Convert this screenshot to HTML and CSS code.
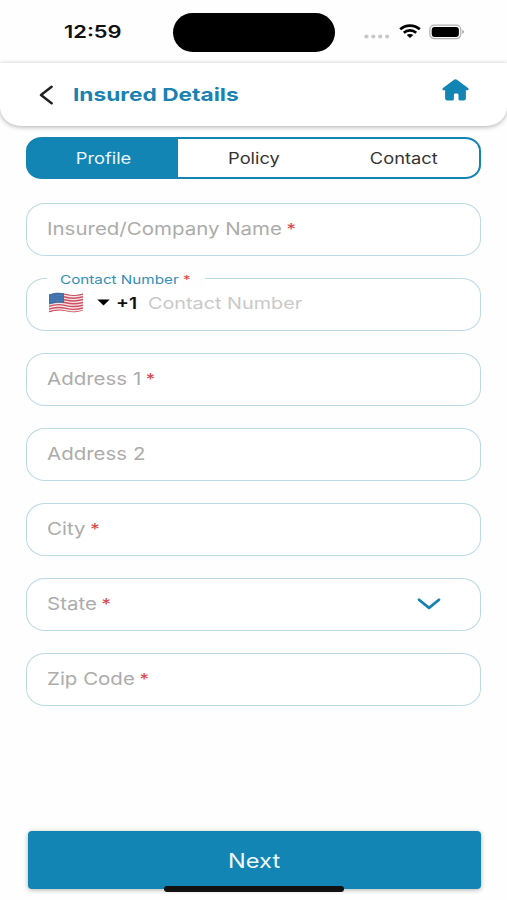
FILE: index.html
```html
<!DOCTYPE html>
<html lang="en">
<head>
<meta charset="utf-8">
<title>Insured Details</title>
<link rel="stylesheet" href="styles.css">
</head>
<body>
<div class="status">
  <div class="time"><span class="wide">12:59</span></div>
  <div class="island"></div>
  <div class="indicators">
    <svg class="dots" width="26" height="5" viewBox="0 0 26 5" fill="#c8c8c8"><circle cx="2.400" cy="2.500" r="2.100"/><circle cx="9.300" cy="2.500" r="2.100"/><circle cx="16.200" cy="2.500" r="2.100"/><circle cx="23.100" cy="2.500" r="2.100"/></svg>
    <svg class="wifi" width="22" height="14" viewBox="0 0 22 14" fill="none" stroke="#000" stroke-width="2.700"><path d="M1.200 5.200C6.800.3 15.200.3 20.800 5.200"/><path d="M4.800 8.700c3.500-3 8.900-3 12.400 0"/><path d="M11 14 7.700 11.100c1.800-1.600 4.800-1.600 6.600 0z" fill="#000" stroke="none"/></svg>
    <svg class="battery" width="36" height="16" viewBox="0 0 36 16"><rect x=".8" y="1.200" width="31" height="13.400" rx="4.600" ry="4" fill="#fff" stroke="#b0b0b0" stroke-width="1.200"/><rect x="2.700" y="2.900" width="27.200" height="10" rx="3" fill="#000"/><path d="M33.400 5.800c2 .8 2 3.400 0 4.200z" fill="#999"/></svg>
  </div>
</div>
<header class="header">
  <svg class="back" width="14" height="20" viewBox="0 0 14 20" fill="none" stroke="#222" stroke-width="2.500" stroke-linecap="round" stroke-linejoin="round"><path d="M12.600 1.800 2 10l10.600 8.200"/></svg>
  <h1 class="title"><span class="wide">Insured Details</span></h1>
  <svg class="home" width="27" height="22" viewBox="0 0 27 22" fill="#1285b5"><path d="M12 .7q1.500-1.100 3 0l11 8.400c1 .9.700 2.200-.6 2.200h-1.500v8.300q0 2-2.200 2h-3.500q-1.700 0-1.700-1.500v-4.100q0-1.400-1.400-1.400h-1.800q-1.400 0-1.400 1.400v4.100q0 1.500-1.700 1.500H5.300q-2.200 0-2.200-2v-8.300H1.600C.3 11.300 0 10 1 9.100z"/></svg>
</header>
<main class="content">
  <nav class="tabs">
    <div class="tab active"><span class="wide">Profile</span></div>
    <div class="tab"><span class="wide">Policy</span></div>
    <div class="tab"><span class="wide">Contact</span></div>
  </nav>
  <form class="form">
    <div class="field"><span class="wide">Insured/Company Name <b>*</b></span></div>
    <div class="field phone">
      <div class="legend"><span class="wide">Contact Number <b>*</b></span></div>
      <svg class="flag" width="36" height="22" viewBox="0 0 36 22">
        <defs><clipPath id="flag-shape"><path d="M1 2.500C7 .2 12 .2 18 1.800S29 3.300 35 1.200V18.500C29 20.600 24 20.800 18 19.300S7 18.500 1 20.600z"/></clipPath></defs>
        <g clip-path="url(#flag-shape)">
          <rect width="36" height="22" fill="#f4e6e8"/>
          <g fill="none" stroke="#cf5060" stroke-width="1.450">
            <path id="stripe" d="M0 3.300C7 .8 12 .8 18 2.400S29 3.900 36 1.700"/>
            <use href="#stripe" y="2.800"/><use href="#stripe" y="5.600"/><use href="#stripe" y="8.400"/><use href="#stripe" y="11.200"/><use href="#stripe" y="14"/><use href="#stripe" y="16.800"/>
          </g>
          <path d="M0 0H16V11.200C11 10.300 7 10.600 0 12.800z" fill="#3f70ab"/>
          <g stroke="#6f97c6" stroke-width=".8" stroke-dasharray="1 1.700"><path d="M2.500 4.200 15 3.400M3.500 6.600 15 5.800M2.500 9 15 8.200"/></g>
        </g>
      </svg>
      <svg class="caret" width="13" height="7" viewBox="0 0 13 7"><path d="M.3.500h12.400L6.500 6.600z"/></svg>
      <span class="code"><span class="wide">+1</span></span>
      <span class="hint"><span class="wide">Contact Number</span></span>
    </div>
    <div class="field"><span class="wide">Address 1 <b>*</b></span></div>
    <div class="field"><span class="wide">Address 2</span></div>
    <div class="field"><span class="wide">City <b>*</b></span></div>
    <div class="field select"><span class="wide">State <b>*</b></span>
      <svg class="chevron" width="24" height="13" viewBox="0 0 24 13" fill="none" stroke="#1680b0" stroke-width="2.700" stroke-linecap="round" stroke-linejoin="round"><path d="M2 2.700 12 10.900 22 2.700"/></svg>
    </div>
    <div class="field"><span class="wide">Zip Code <b>*</b></span></div>
  </form>
</main>
<footer class="footer">
  <button class="next" type="button"><span class="wide">Next</span></button>
  <div class="home-bar"></div>
</footer>
</body>
</html>
```
FILE: styles.css
```css
* { box-sizing: border-box; }
body {
  margin: 0;
  width: 507px;
  height: 900px;
  overflow: hidden;
  display: flex;
  flex-direction: column;
  background: #fefefe;
  color: #333;
  font-family: Inter, "Liberation Sans", sans-serif;
}
svg { display: block; flex: none; }
.wide {
  display: inline-block;
  white-space: nowrap;
  transform: scaleX(1.2);
  transform-origin: left center;
}
.status {
  height: 63px;
  flex: none;
  display: grid;
  grid-template-columns: 173px 162px 1fr;
  align-items: start;
}
.time {
  padding: 21px 0 0 64px;
  font-size: 17.5px;
  line-height: 22px;
  font-weight: 600;
  color: #111;
}
.time .wide { transform: scaleX(1.25); }
.island {
  margin-top: 12.5px;
  height: 39px;
  border-radius: 20px;
  background: #000;
}
.indicators {
  display: flex;
  align-items: flex-start;
  padding: 24px 0 0 28.5px;
}
.dots { margin: 10px 9px 0 0; }
.wifi { margin-right: 8px; }
.header {
  height: 63px;
  flex: none;
  display: flex;
  align-items: flex-start;
  padding: 0 38px;
  background: #fff;
  border-radius: 0 0 21px 21px / 0 0 19px 19px;
  box-shadow: 0 1px 5px rgba(0, 0, 0, .32);
}
.back { margin: 22px 19.5px 0 1px; }
.title {
  flex: 1;
  margin: 20px 0 0;
  font-size: 18px;
  line-height: 24px;
  font-weight: 700;
  color: #1a82b1;
}
.title .wide { transform: scaleX(1.26); }
.home { margin: 16px 0 0; }
.content { padding: 11px 26px 0; }
.tabs {
  height: 42px;
  display: grid;
  grid-template-columns: repeat(3, 1fr);
  border: 2px solid #1484b3;
  border-radius: 16px / 14px;
  background: #1285b5;
  overflow: hidden;
}
.tab {
  display: flex;
  align-items: center;
  justify-content: center;
  background: #fff;
  font-size: 15.5px;
}
.tab .wide, .next .wide { transform: scaleX(1.18); transform-origin: center; }
.tab.active { background: #1285b5; color: #eaf6fc; }
.form {
  display: flex;
  flex-direction: column;
  gap: 22px;
  margin-top: 24px;
}
.field {
  position: relative;
  height: 53px;
  padding: 0 20px 2px;
  display: flex;
  align-items: center;
  border: 1px solid #bcdae6;
  border-radius: 19px / 17px;
  background: #fff;
  font-size: 17.5px;
  line-height: 22px;
  color: #acacac;
}
.field > .wide { transform: scaleX(1.17); }
.field b { margin-left: -1px; font-size: 16px; color: #d9434c; font-weight: 400; }
.legend {
  position: absolute;
  left: 20px;
  top: -8px;
  width: 158px;
  padding-left: 12.5px;
  background: #fefefe;
  font-size: 12px;
  line-height: 18px;
  color: #358fb9;
}
.legend .wide { transform: scaleX(1.27); }
.legend b { margin-left: 0; font-size: 12px; }
.phone { padding-bottom: 4px; }
.flag { margin: 0 13px 0 1px; }
.caret { margin-right: 6px; }
.code { width: 32px; font-size: 16px; font-weight: 600; color: #111; }
.hint { font-size: 16.5px; color: #c9c9c9; }
.select { justify-content: space-between; padding-right: 39px; }
.footer {
  position: relative;
  margin-top: auto;
  padding: 0 26.5px 11.5px 27.5px;
}
.next {
  display: block;
  width: 100%;
  height: 57.5px;
  padding: 3px 0 0;
  border: 0;
  border-radius: 4px;
  background: #1285b5;
  box-shadow: 0 1px 5px rgba(0, 0, 0, .3);
  color: #f0f9fd;
  font: 400 20px/54px Inter, "Liberation Sans", sans-serif;
}
.home-bar {
  position: absolute;
  left: 164px;
  bottom: 8.5px;
  width: 180px;
  height: 5.5px;
  border-radius: 3px;
  background: #111;
}
```
